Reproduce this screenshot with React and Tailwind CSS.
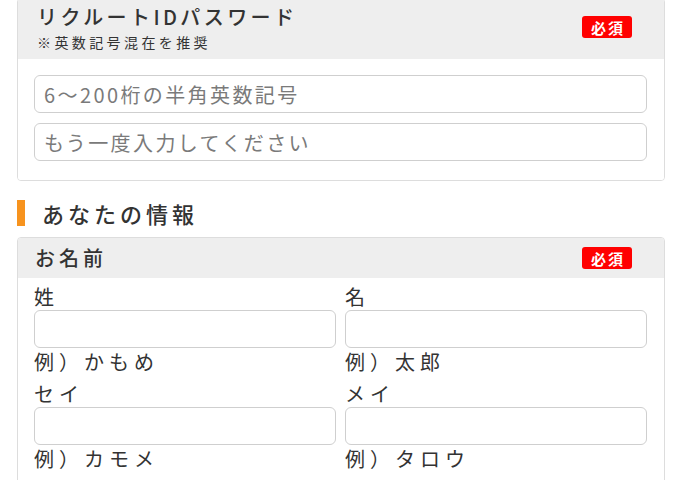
import React from "react";

const font = { fontFamily: '"Noto Sans CJK JP", "Noto Sans", sans-serif' };

function Badge() {
  return (
    <span className="flex h-[22px] w-[50px] shrink-0 items-center justify-center rounded-[3px] bg-[#ff0000] pl-[2px] text-[15px] font-bold leading-none tracking-[2px] text-white">
      必須
    </span>
  );
}

function TextInput({ placeholder }) {
  return (
    <input
      type="text"
      placeholder={placeholder}
      className="block h-[38px] w-full rounded-[6px] border border-[#cfcfcf] bg-white px-[9px] text-[20px] tracking-[2.4px] text-[#333] outline-none placeholder:text-[#7a7a7a]"
    />
  );
}

function Field({ label, example }) {
  return (
    <div className="flex flex-col">
      <div className="text-[20px] leading-[26px] tracking-[5px] text-[#333]">{label}</div>
      <TextInput placeholder="" />
      <div className="mt-[1px] text-[20px] leading-[26px] tracking-[5px] text-[#333]">{example}</div>
    </div>
  );
}

export default function App() {
  return (
    <div className="h-[480px] w-[680px] overflow-hidden bg-white pl-[17px] pr-[15px]" style={font}>
      {/* Password card */}
      <div className="mt-[-2px] overflow-hidden rounded-[4px] border border-[#dddddd]">
        <div className="flex items-center justify-between bg-[#eeeeee] pl-[19px] pr-[32px] pt-[3px] pb-[7px]">
          <div className="flex flex-col">
            <div className="text-[20px] font-medium leading-[30px] tracking-[3.4px] text-[#333]">
              リクルートIDパスワード
            </div>
            <div className="text-[14px] leading-[20px] tracking-[3.4px] text-[#333]">
              ※英数記号混在を推奨
            </div>
          </div>
          <Badge />
        </div>
        <div className="flex flex-col gap-[10px] bg-white pl-[16px] pr-[17px] pt-[16px] pb-[19px]">
          <TextInput placeholder="6〜200桁の半角英数記号" />
          <TextInput placeholder="もう一度入力してください" />
        </div>
      </div>

      {/* Section heading */}
      <div className="mt-[19px] flex h-[26px] items-center gap-[17px]">
        <span className="h-[26px] w-[8px] bg-[#f7931e]" />
        <h2 className="text-[22px] font-medium leading-[26px] tracking-[4px] text-[#333]">
          あなたの情報
        </h2>
      </div>

      {/* Name card */}
      <div className="mt-[11px] overflow-hidden rounded-[4px] border border-[#dddddd]">
        <div className="flex h-[40px] items-center justify-between bg-[#eeeeee] pl-[17px] pr-[32px]">
          <div className="text-[20px] font-medium leading-[26px] tracking-[4px] text-[#333]">お名前</div>
          <Badge />
        </div>
        <div className="grid grid-cols-2 gap-x-[9px] gap-y-[6px] bg-white pl-[16px] pr-[17px] pt-[6px] pb-[16px]">
          <Field label="姓" example="例）かもめ" />
          <Field label="名" example="例）太郎" />
          <Field label="セイ" example="例）カモメ" />
          <Field label="メイ" example="例）タロウ" />
        </div>
      </div>
    </div>
  );
}
